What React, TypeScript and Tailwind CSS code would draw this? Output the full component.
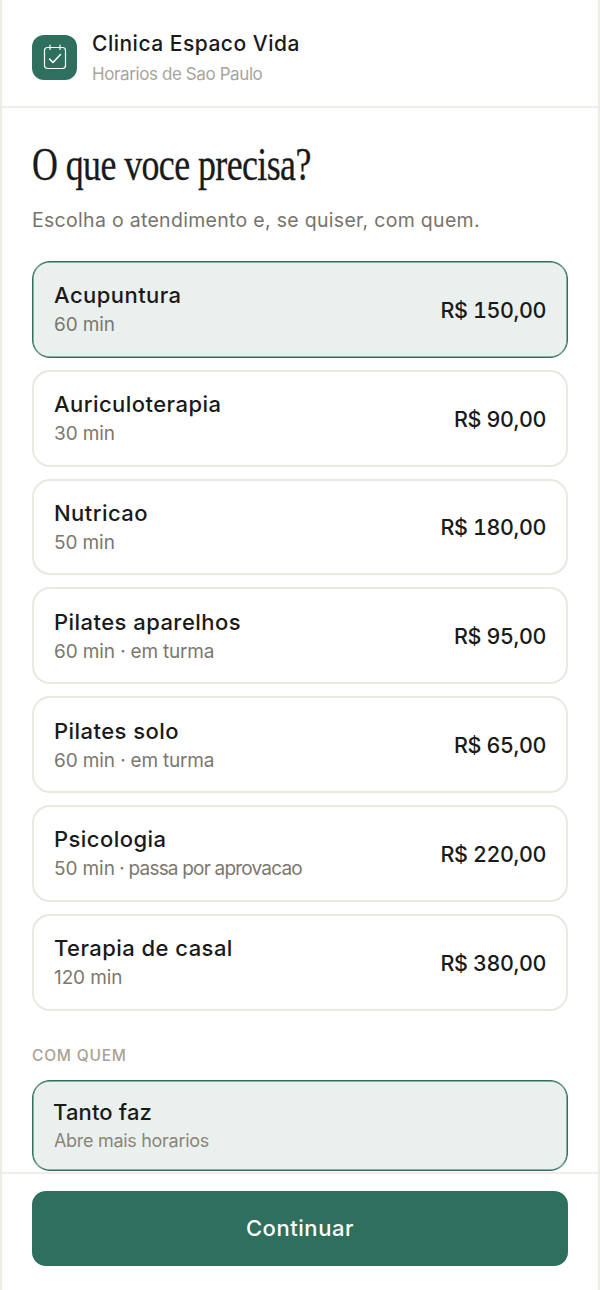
import React from "react";

const services = [
  { name: "Acupuntura", sub: "60 min", price: "R$ 150,00", selected: true },
  { name: "Auriculoterapia", sub: "30 min", price: "R$ 90,00" },
  { name: "Nutricao", sub: "50 min", price: "R$ 180,00" },
  { name: "Pilates aparelhos", sub: "60 min", tail: " · em turma", tailClass: "tracking-[-0.2px]", price: "R$ 95,00" },
  { name: "Pilates solo", sub: "60 min", tail: " · em turma", tailClass: "tracking-[-0.2px]", price: "R$ 65,00" },
  { name: "Psicologia", sub: "50 min", tail: " · passa por aprovacao", tailClass: "tracking-[-0.8px]", price: "R$ 220,00" },
  { name: "Terapia de casal", sub: "120 min", price: "R$ 380,00" },
];

function Logo() {
  return (
    <div className="w-[45px] h-[45px] rounded-[12px] bg-[#2f6f5e] flex items-center justify-center shrink-0">
      <svg width="24" height="26" viewBox="0 0 24 26" fill="none" stroke="#ffffff" strokeWidth="1.2" strokeLinecap="round" strokeLinejoin="round">
        <rect x="1.5" y="3.5" width="21" height="21" rx="3" />
        <path d="M7 1v4.5M17 1v4.5" />
        <path d="M6.5 15l3.5 3.5 7.5-8" strokeWidth="1.5" />
      </svg>
    </div>
  );
}

export default function App() {
  return (
    <div className="h-[1290px] w-[600px] bg-white border-x-2 border-[#eeebe5] flex flex-col overflow-hidden font-['Inter','Liberation_Sans',sans-serif] text-[#1a1a1a]">
      <header className="h-[108px] shrink-0 border-b-2 border-[#f0eee9] flex items-center gap-[15px] pl-[30px] pr-[30px] pt-[8px]">
        <Logo />
        <div className="flex flex-col pt-[1px]">
          <div className="text-[21px] leading-[28px] font-[530] tracking-[0.5px]">Clinica Espaco Vida</div>
          <div className="text-[17px] leading-[24px] mt-[4px] text-[#a8a49d] tracking-[-0.4px]">Horarios de Sao Paulo</div>
        </div>
      </header>
      <main className="flex-1 min-h-0 overflow-hidden pl-[30px] pr-[30px]">
        <h1 className="mt-[33px] text-[46px] leading-[48px] font-['Liberation_Serif',serif] tracking-[-0.75px] [-webkit-text-stroke:0.3px_#1a1a1a] origin-left scale-x-[0.78] whitespace-nowrap text-[#1a1a1a]">O que voce precisa?</h1>
        <p className="mt-[17px] text-[19.5px] leading-[28px] text-[#77736c] tracking-[0.3px]">Escolha o atendimento e, se quiser, com quem.</p>
        <div className="mt-[27px] flex flex-col gap-[12px]">
          {services.map((s) => (
            <div
              key={s.name}
              className={
                s.selected
                  ? "h-[96.8px] rounded-[18px] border-[1px] border-[#2f6f5e] shadow-[inset_0_0_0_0.5px_#2f6f5e] bg-[#eaf0ed] px-[21px] flex items-center justify-between"
                  : "h-[96.8px] rounded-[18px] border-2 border-[#ebe8e1] bg-white px-[20px] flex items-center justify-between"
              }
            >
              <div className="flex flex-col pt-[2px]">
                <div className="text-[22px] leading-[30px] font-[530] tracking-[0.45px]">{s.name}</div>
                <div className="text-[19px] leading-[30px] text-[#7c776f] tracking-[-0.1px] whitespace-pre">
                  {s.sub}
                  {s.tail && <span className={s.tailClass}>{s.tail}</span>}
                </div>
              </div>
              <div className="pt-[1px] text-[21.5px] font-[530] tracking-[-0.4px] tabular-nums">{s.price}</div>
            </div>
          ))}
        </div>
        <div className="mt-[35px] text-[15.5px] leading-[20px] font-medium tracking-[0.8px] text-[#a8a297]">COM QUEM</div>
        <div className="mt-[14px] h-[91px] rounded-[18px] border-[1px] border-[#2f6f5e] shadow-[inset_0_0_0_0.5px_#2f6f5e] bg-[#eaf0ed] pl-[21px] flex flex-col justify-center">
          <div className="pt-[2px] -ml-[1px] text-[22px] leading-[29px] font-[530] tracking-[0.15px]">Tanto faz</div>
          <div className="text-[18px] leading-[27px] text-[#8a857c] tracking-[-0.3px]">Abre mais horarios</div>
        </div>
      </main>
      <footer className="relative h-[118px] shrink-0 border-t-2 border-[#f0eee9] pt-[17px] pl-[30px] pr-[30px]">
        <div className="absolute top-0 right-[-2px] bottom-0 w-[2px] bg-[#8fbdb0]" />
        <button className="w-full h-[75px] rounded-[14px] bg-[#2f6f5e] text-white text-[22px] font-[530] tracking-[0.55px]">Continuar</button>
      </footer>
    </div>
  );
}
